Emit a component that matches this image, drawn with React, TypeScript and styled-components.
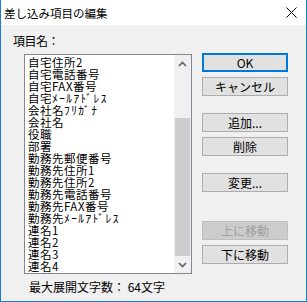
import React from 'react'
import styled, { createGlobalStyle } from 'styled-components'

const GlobalStyle = createGlobalStyle`
  html, body {
    margin: 0;
    padding: 0;
    background: #f0f0f0;
  }
  * {
    box-sizing: border-box;
  }
`

const fontStack = `'Noto Sans CJK JP', 'Noto Sans', sans-serif`

const items = [
  '自宅住所2',
  '自宅電話番号',
  '自宅FAX番号',
  '自宅ﾒｰﾙｱﾄﾞﾚｽ',
  '会社名ﾌﾘｶﾞﾅ',
  '会社名',
  '役職',
  '部署',
  '勤務先郵便番号',
  '勤務先住所1',
  '勤務先住所2',
  '勤務先電話番号',
  '勤務先FAX番号',
  '勤務先ﾒｰﾙｱﾄﾞﾚｽ',
  '連名1',
  '連名2',
  '連名3',
  '連名4'
]

const buttons = [
  { label: 'OK', primary: true },
  { label: 'キャンセル' },
  { label: '追加...', space: 17 },
  { label: '削除' },
  { label: '変更...', space: 17 },
  { label: '上に移動', space: 29, disabled: true },
  { label: '下に移動' }
]

const StyledWindow = styled('div')`
  width: 307px;
  height: 302px;
  display: flex;
  flex-direction: column;
  border: 1px solid #1a7fd4;
  border-top: none;
  background: #f0f0f0;
  font-family: ${fontStack};
  color: #000000;
  overflow: hidden;
`

const StyledTitleBar = styled('div')`
  height: 25px;
  flex: none;
  display: flex;
  align-items: center;
  justify-content: space-between;
  padding: 0 9px 0 3px;
  background: #ffffff;
  font-size: 11.5px;
`

const StyledBody = styled('div')`
  display: flex;
  flex-direction: column;
  padding: 9px 0 0 12px;
`

const StyledLabel = styled('div')`
  font-size: 12px;
  line-height: 14px;
  letter-spacing: -0.5px;
`

const StyledRow = styled('div')`
  display: flex;
  margin: 6px 0 0 11px;
`

const StyledListColumn = styled('div')`
  display: flex;
  flex-direction: column;
`

const StyledListBox = styled('div')`
  width: 168px;
  height: 220px;
  display: flex;
  border: 1px solid #828790;
  background: #ffffff;
`

const StyledItems = styled('div')`
  flex: 1;
  padding: 1px 0 0 3px;
  overflow: hidden;
`

const StyledItem = styled('div')`
  font-size: 11.5px;
  letter-spacing: 0.5px;
  line-height: 12px;
  height: 12px;
  white-space: nowrap;
`

const StyledHalfKana = styled('span')`
  letter-spacing: 1.4px;
`

const StyledScrollbar = styled('div')`
  width: 17px;
  display: flex;
  flex-direction: column;
  background: #f0f0f0;
`

const StyledArrow = styled('div')`
  height: 17px;
  flex: none;
  display: flex;
  align-items: center;
  justify-content: center;
`

const StyledTrack = styled('div')`
  flex: 1;
  display: flex;
  flex-direction: column;
  justify-content: flex-end;
`

const StyledThumb = styled('div')`
  height: 138px;
  margin: 0 1px;
  background: #cdcdcd;
`

const StyledFooter = styled('div')`
  margin: 6px 0 0 5px;
  font-size: 12px;
  line-height: 14px;
  white-space: pre;
`

const StyledButtons = styled('div')`
  display: flex;
  flex-direction: column;
  margin: -1px 0 0 10px;
`

type StyledButtonProps = {
  $primary?: boolean,
  $space?: number
}

const StyledButton = styled('button')<StyledButtonProps>`
  width: 86px;
  height: 19px;
  margin-top: ${(props) => (props.$space ?? 5)}px;
  padding: 0;
  font-family: ${fontStack};
  font-size: 12px;
  line-height: 1;
  color: #000000;
  background: #e1e1e1;
  border: ${(props) => (props.$primary ? '2px solid #0078d7' : '1px solid #adadad')};

  &:first-child {
    margin-top: 0;
  }

  &:disabled {
    color: #a0a0a0;
    background: #cccccc;
    border-color: #bfbfbf;
  }
`

function Chevron({ up }: { up?: boolean }) {
  return (
    <svg width="9" height="6" viewBox="0 0 9 6">
      <path
        d={up ? 'M1 5 L4.5 1.5 L8 5' : 'M1 1 L4.5 4.5 L8 1'}
        fill="none"
        stroke="#606060"
        strokeWidth="1.6"
      />
    </svg>
  )
}

function CloseIcon() {
  return (
    <svg width="11" height="11" viewBox="0 0 11 11">
      <path d="M0.5 0.5 L10.5 10.5 M10.5 0.5 L0.5 10.5" stroke="#000000" strokeWidth="1" />
    </svg>
  )
}

// half-width katakana renders narrower than the dialog font, so space it out
function ItemLabel({ text }: { text: string }) {
  const parts = text.split(/([\uFF61-\uFF9F]+)/)

  return (
    <StyledItem>
      {parts.map((part, i) => (i % 2 === 1
        ? <StyledHalfKana key={i}>{part}</StyledHalfKana>
        : part))}
    </StyledItem>
  )
}

function App() {
  return (
    <StyledWindow>
      <GlobalStyle />
      <StyledTitleBar>
        <span>差し込み項目の編集</span>
        <CloseIcon />
      </StyledTitleBar>
      <StyledBody>
        <StyledLabel>項目名：</StyledLabel>
        <StyledRow>
          <StyledListColumn>
            <StyledListBox>
              <StyledItems>
                {items.map((item) => (
                  <ItemLabel key={item} text={item} />
                ))}
              </StyledItems>
              <StyledScrollbar>
                <StyledArrow><Chevron up /></StyledArrow>
                <StyledTrack>
                  <StyledThumb />
                </StyledTrack>
                <StyledArrow><Chevron /></StyledArrow>
              </StyledScrollbar>
            </StyledListBox>
            <StyledFooter>最大展開文字数： 64文字</StyledFooter>
          </StyledListColumn>
          <StyledButtons>
            {buttons.map(({ label, primary, space, disabled }) => (
              <StyledButton key={label} $primary={primary} $space={space} disabled={disabled}>
                {label}
              </StyledButton>
            ))}
          </StyledButtons>
        </StyledRow>
      </StyledBody>
    </StyledWindow>
  )
}

export default App
